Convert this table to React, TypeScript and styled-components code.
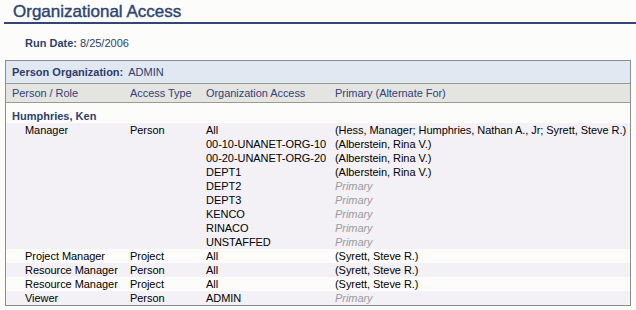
import React from "react";
import styled, { createGlobalStyle } from "styled-components";

const Global = createGlobalStyle`
  html, body { margin: 0; padding: 0; background: #fcfdfb; }
  body { font-family: "Liberation Sans", Arial, sans-serif; font-size: 11px; color: #000; }
`;

const Page = styled.div`
  padding: 0 0 0 4px;
  width: 632px;
`;

const TitleBar = styled.div`
  height: 22px;
  border-bottom: 2px solid #31477a;
  padding-left: 9px;
  display: flex;
  align-items: flex-end;
`;

const Title = styled.h1`
  margin: 0;
  font-size: 17px;
  font-weight: normal;
  line-height: 20px;
  color: #2d4476;
  -webkit-text-stroke: 0.4px #2d4476;
`;

const RunDate = styled.div`
  padding: 12px 0 0 21px;
  height: 24px;
  line-height: 14px;
  color: #2c3e6e;
  box-sizing: border-box;
  b { margin-right: 3px; }
`;

const Box = styled.div`
  margin-top: 12px;
  margin-left: 1px;
  width: 626px;
  border: 1px solid #8c8c8c;
  box-sizing: border-box;
`;

const OrgBar = styled.div`
  height: 22px;
  background: #e2e8f2;
  border-bottom: 1px solid #9a9a9a;
  padding-left: 6px;
  display: flex;
  align-items: center;
  color: #2b3d6b;
  b { margin-right: 5px; }
`;

const Grid = styled.div<{ $bg?: string }>`
  display: grid;
  grid-template-columns: 118px 76px 129px 1fr;
  padding-left: 6px;
  line-height: 14px;
  letter-spacing: -0.05px;
  background: ${(p) => p.$bg ?? "transparent"};
`;

const HeadRow = styled(Grid)`
  height: 18px;
  align-items: center;
  background: #e4e5e1;
  border-bottom: 1px solid #9a9a9a;
`;

const HeadCell = styled.div`
  white-space: nowrap;
  color: #30427a;
`;

const Group = styled.div`
  height: 20px;
  box-sizing: border-box;
  padding: 6px 0 0 6px;
  line-height: 14px;
  font-weight: bold;
  color: #2c3f70;
`;

const Cell = styled.div<{ $indent?: boolean; $muted?: boolean }>`
  padding-left: ${(p) => (p.$indent ? "13px" : "0")};
  white-space: nowrap;
  font-style: ${(p) => (p.$muted ? "italic" : "normal")};
  color: ${(p) => (p.$muted ? "#9b9b9b" : "#000")};
`;

type Row = { role?: string; type?: string; org: string; alt?: string };
type Block = { bg: string; rows: Row[] };

const blocks: Block[] = [
  {
    bg: "#f3f1f6",
    rows: [
      { role: "Manager", type: "Person", org: "All", alt: "(Hess, Manager; Humphries, Nathan A., Jr; Syrett, Steve R.)" },
      { org: "00-10-UNANET-ORG-10", alt: "(Alberstein, Rina V.)" },
      { org: "00-20-UNANET-ORG-20", alt: "(Alberstein, Rina V.)" },
      { org: "DEPT1", alt: "(Alberstein, Rina V.)" },
      { org: "DEPT2" },
      { org: "DEPT3" },
      { org: "KENCO" },
      { org: "RINACO" },
      { org: "UNSTAFFED" },
    ],
  },
  { bg: "#fcfdfb", rows: [{ role: "Project Manager", type: "Project", org: "All", alt: "(Syrett, Steve R.)" }] },
  { bg: "#f3f1f6", rows: [{ role: "Resource Manager", type: "Person", org: "All", alt: "(Syrett, Steve R.)" }] },
  { bg: "#fcfdfb", rows: [{ role: "Resource Manager", type: "Project", org: "All", alt: "(Syrett, Steve R.)" }] },
  { bg: "#f3f1f6", rows: [{ role: "Viewer", type: "Person", org: "ADMIN" }] },
];

const headers = ["Person / Role", "Access Type", "Organization Access", "Primary (Alternate For)"];

export default function App() {
  return (
    <>
      <Global />
      <Page>
        <TitleBar>
          <Title>Organizational Access</Title>
        </TitleBar>
        <RunDate>
          <b>Run Date:</b>8/25/2006
        </RunDate>
        <Box>
          <OrgBar>
            <b>Person Organization:</b> ADMIN
          </OrgBar>
          <HeadRow>
            {headers.map((h) => (
              <HeadCell key={h}>{h}</HeadCell>
            ))}
          </HeadRow>
          <Group>Humphries, Ken</Group>
          {blocks.map((b, i) => (
            <Grid key={i} $bg={b.bg}>
              {b.rows.map((r, j) => (
                <React.Fragment key={j}>
                  <Cell $indent>{r.role ?? ""}</Cell>
                  <Cell>{r.type ?? ""}</Cell>
                  <Cell>{r.org}</Cell>
                  <Cell $muted={!r.alt}>{r.alt ?? "Primary"}</Cell>
                </React.Fragment>
              ))}
            </Grid>
          ))}
        </Box>
      </Page>
    </>
  );
}
